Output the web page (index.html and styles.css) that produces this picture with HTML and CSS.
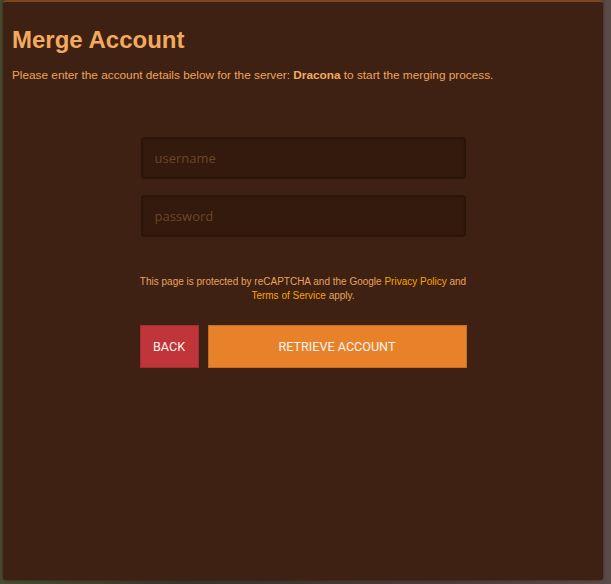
FILE: index.html
```html
<!DOCTYPE html>
<html lang="en">
<head>
    <meta charset="UTF-8">
    <meta name="viewport" content="width=device-width, initial-scale=1.0">
    <title>Merge Account</title>
    <link rel="stylesheet" href="styles.css">
</head>
<body>
    <div class="panel">
        <h1 class="title">Merge Account</h1>
        <p class="intro">Please enter the account details below for the server: <b>Dracona</b> to start the merging process.</p>

        <form class="merge-form">
            <input class="field" type="text" placeholder="username">
            <input class="field" type="password" placeholder="password">

            <p class="captcha">This page is protected by reCAPTCHA and the Google <a href="#">Privacy Policy</a> and <a href="#">Terms of Service</a> apply.</p>

            <div class="actions">
                <button type="button" class="btn btn-back">BACK</button>
                <button type="button" class="btn btn-retrieve">RETRIEVE ACCOUNT</button>
            </div>
        </form>
    </div>
</body>
</html>
```

FILE: styles.css
```css
body {
    margin: 0;
    padding: 0;
    height: 584px;
    overflow: hidden;
    font-family: "Liberation Sans", Arial, sans-serif;
    background: linear-gradient(90deg, #4a4a30 0%, #3a3528 30%, #4a3a3a 70%, #5a4a48 100%);
}

.panel {
    box-sizing: border-box;
    width: 600px;
    height: 580px;
    margin-left: 3px;
    padding: 24px 9px 0 9px;
    background-color: #3f2113;
    border-top: 2px solid #7a4722;
    border-radius: 3px;
    box-shadow: 0 0 3px rgba(0, 0, 0, 0.5);
}

.title {
    margin: 0;
    font-size: 24px;
    font-weight: bold;
    color: #f2aa5e;
    line-height: 28px;
}

.intro {
    margin: 13px 0 0 0;
    font-size: 11.8px;
    color: #eba45c;
    line-height: 16px;
}

.intro b {
    color: #f0ab62;
}

.merge-form {
    width: 327px;
    margin: 54px auto 0;
    display: flex;
    flex-direction: column;
    align-items: center;
}

.field {
    box-sizing: border-box;
    width: 325px;
    height: 42px;
    margin-bottom: 16px;
    padding: 0 13px;
    background-color: #331a0c;
    border: 1px solid #2a1508;
    border-radius: 3px;
    box-shadow: inset 0 0 3px rgba(0, 0, 0, 0.35);
    font-family: "Open Sans", sans-serif;
    font-size: 13px;
    color: #d9a070;
    outline: none;
}

.field::placeholder {
    color: #6e4526;
}

.captcha {
    margin: 22px 0 0 0;
    font-size: 10px;
    line-height: 14px;
    text-align: center;
    color: #e5a35d;
}

.captcha a {
    color: #f5a300;
    text-decoration: none;
}

.actions {
    display: flex;
    gap: 9px;
    width: 327px;
    margin-top: 22px;
}

.btn {
    height: 43px;
    border: 1px solid rgba(0, 0, 0, 0.15);
    font-family: Roboto, sans-serif;
    font-size: 12.6px;
    color: #fff3ea;
    cursor: pointer;
}

.btn-back {
    width: 59px;
    background-color: #c0353a;
}

.btn-retrieve {
    flex: 1;
    background-color: #e8822a;
}
```
